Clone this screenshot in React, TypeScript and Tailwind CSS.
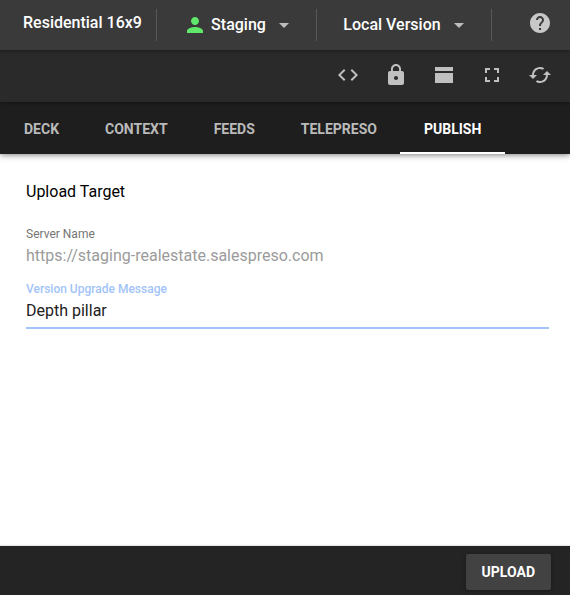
import type { ReactNode } from 'react';

function Icon({ d, className = '' }: { d: string; className?: string }) {
  return (
    <svg viewBox="0 0 24 24" className={`size-6 shrink-0 fill-current ${className}`} aria-hidden="true">
      <path d={d} />
    </svg>
  );
}

const icons = {
  person: 'M12 12c2.21 0 4-1.79 4-4s-1.79-4-4-4-4 1.79-4 4 1.79 4 4 4zm0 2c-2.67 0-8 1.34-8 4v2h16v-2c0-2.66-5.33-4-8-4z',
  caret: 'M7 10l5 5 5-5z',
  help: 'M12 2C6.48 2 2 6.48 2 12s4.48 10 10 10 10-4.48 10-10S17.52 2 12 2zm1 17h-2v-2h2v2zm2.07-7.75l-.9.92C13.45 12.9 13 13.5 13 15h-2v-.5c0-1.1.45-2.1 1.17-2.83l1.24-1.26c.37-.36.59-.86.59-1.41 0-1.1-.9-2-2-2s-2 .9-2 2H8c0-2.21 1.79-4 4-4s4 1.79 4 4c0 .88-.36 1.68-.93 2.25z',
  code: 'M9.4 16.6L4.8 12l4.6-4.6L8 6l-6 6 6 6 1.4-1.4zm5.2 0l4.6-4.6-4.6-4.6L16 6l6 6-6 6-1.4-1.4z',
  lock: 'M18 8h-1V6c0-2.76-2.24-5-5-5S7 3.24 7 6v2H6c-1.1 0-2 .9-2 2v10c0 1.1.9 2 2 2h12c1.1 0 2-.9 2-2V10c0-1.1-.9-2-2-2zm-6 9c-1.1 0-2-.9-2-2s.9-2 2-2 2 .9 2 2-.9 2-2 2zm3.1-9H8.9V6c0-1.71 1.39-3.1 3.1-3.1 1.71 0 3.1 1.39 3.1 3.1v2z',
  layout: 'M3 4h18v4H3zM3 10h18v10H3z',
  fullscreen: 'M7 14H5v5h5v-2H7v-3zm-2-4h2V7h3V5H5v5zm12 7h-3v2h5v-5h-2v3zM14 5v2h3v3h2V5h-5z',
  refresh: 'M19 8l-4 4h3c0 3.31-2.69 6-6 6-1.01 0-1.97-.25-2.8-.7l-1.46 1.46C8.97 19.54 10.43 20 12 20c4.42 0 8-3.58 8-8h3l-4-4zM6 12c0-3.31 2.69-6 6-6 1.01 0 1.97.25 2.8.7l1.46-1.46C15.03 4.46 13.57 4 12 4c-4.42 0-8 3.58-8 8H1l4 4 4-4H6z',
};

const tools = [
  { name: 'View code', d: icons.code },
  { name: 'Lock', d: icons.lock },
  { name: 'Layout', d: icons.layout },
  { name: 'Full screen', d: icons.fullscreen },
  { name: 'Refresh', d: icons.refresh },
];

const tabs = ['DECK', 'CONTEXT', 'FEEDS', 'TELEPRESO', 'PUBLISH'];

function Divider() {
  return <div className="h-8 w-px shrink-0 bg-[#595959]" />;
}

function MenuButton({ children }: { children: ReactNode }) {
  return (
    <button type="button" aria-haspopup="menu" className="flex flex-auto items-center justify-center pl-1.5 font-medium whitespace-nowrap">
      {children}
      <Icon d={icons.caret} className="ml-1.5 text-[#bdbdbd]" />
    </button>
  );
}

export default function App() {
  return (
    <div className="flex min-h-screen flex-col bg-white font-['Roboto','Liberation_Sans',sans-serif] text-base">
      <header className="relative z-20 flex h-[50px] items-center bg-[#3a3a3a] text-white shadow-[0_1px_4px_rgba(0,0,0,0.4)]">
        <h1 className="w-[156px] pb-1 pl-[23px] font-medium whitespace-nowrap">Residential 16x9</h1>
        <Divider />
        <div className="flex w-[159px]">
          <MenuButton>
            <Icon d={icons.person} className="mr-1 text-[#5fe86a]" />
            Staging
          </MenuButton>
        </div>
        <Divider />
        <div className="flex w-[174px]">
          <MenuButton>Local Version</MenuButton>
        </div>
        <Divider />
        <button type="button" aria-label="Help" className="mr-[18px] mb-1 ml-auto text-[#c8c8c8]">
          <Icon d={icons.help} />
        </button>
      </header>

      <div className="relative z-10 flex h-[52px] items-center justify-end gap-6 bg-[#2a2a2a] pr-[18px] pb-0.5 text-[#c0c0c0] shadow-[0_1px_4px_rgba(0,0,0,0.4)]">
        {tools.map((tool) => (
          <button key={tool.name} type="button" aria-label={tool.name}>
            <Icon d={tool.d} />
          </button>
        ))}
      </div>

      <nav role="tablist" className="flex h-[52px] bg-[#1e1e1e] pl-px text-sm font-bold shadow-[0_1px_6px_rgba(0,0,0,0.5)]">
        {tabs.map((tab) => (
          <button
            key={tab}
            type="button"
            role="tab"
            aria-selected={tab === 'PUBLISH'}
            className="border-b-2 border-transparent px-[23px] pt-1 text-[#bababa] aria-selected:border-white aria-selected:px-6 aria-selected:text-white"
          >
            {tab}
          </button>
        ))}
      </nav>

      <main className="flex flex-1 flex-col px-[26px] pt-[26px] pr-[21px]">
        <h2 className="text-black">Upload Target</h2>
        <label htmlFor="server" className="mt-[22px] text-xs text-[#757575]">Server Name</label>
        <input id="server" disabled defaultValue="https://staging-realestate.salespreso.com" className="h-[26px] w-full text-[#9b9b9b]" />
        <label htmlFor="message" className="mt-[13px] text-xs font-medium text-[#a2c4f8]">Version Upgrade Message</label>
        <input id="message" defaultValue="Depth pillar" className="h-8 w-full border-b-2 border-[#a2c4f8] pb-1 text-[#212121] outline-none" />
      </main>

      <footer className="flex h-[49px] items-start justify-end bg-[#242424] pt-2 pr-[19px] shadow-[0_0_2px_rgba(0,0,0,0.3)]">
        <button type="button" className="h-9 rounded-xs bg-[#424242] px-4 text-sm font-bold text-white shadow-[0_1px_4px_rgba(0,0,0,0.3)]">
          UPLOAD
        </button>
      </footer>
    </div>
  );
}
